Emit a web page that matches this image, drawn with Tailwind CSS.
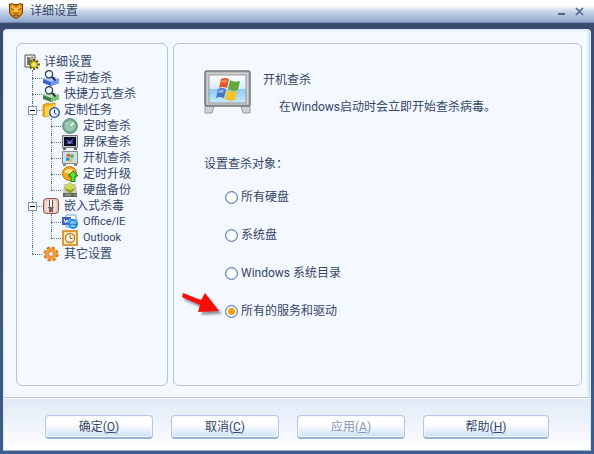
<!DOCTYPE html>
<html lang="zh-CN">
<head>
  <meta charset="UTF-8">
  <meta name="viewport" content="width=device-width, initial-scale=1">
  <title>详细设置</title>
  <script src="https://cdn.jsdelivr.net/npm/@tailwindcss/browser@4"></script>
</head>

<body class="h-screen flex flex-col bg-linear-to-b from-[#3b4b6c] to-[#3f5c8c] text-[#354668] text-xs font-['Roboto','Noto_Sans_CJK_SC',sans-serif]">

  <!-- Title bar -->
  <header class="h-[23px] shrink-0 flex items-center pl-2 pr-[6px] bg-linear-to-b from-white from-25% via-[#ccd7e9] via-50% to-[#92a8cf] border-b border-[#758bb5]">
    <svg class="w-4 h-4" viewBox="0 0 16 16">
      <path d="M1 1 4 0l2 1h4l2-1 3 1v7c0 4-3 6-7 8-4-2-7-4-7-8z" fill="#70410f"/>
      <path d="M2 2l2-1 2 1h4l2-1 2 1v6c0 3-2 5-6 7-4-2-6-4-6-7z" fill="#e79719"/>
      <path d="M4 3l2 2h4l2-2v4l-2 2H6L4 7z" fill="#ffc543"/>
      <path d="M3 5.500l3 1.500M13 5.500l-3 1.500M6 10l2 1 2-1M5 12l3 1 3-1M8 2v2" stroke="#6c3b08" fill="none" stroke-width=".9"/>
    </svg>
    <h1 class="flex-1 pl-[6px]">详细设置</h1>
    <button type="button" aria-label="最小化" class="w-[18px] h-4 flex items-center justify-center">
      <svg class="w-[9px] h-[9px]" viewBox="0 0 9 9"><path d="M1 7h7" stroke="#52658f" stroke-width="2"/></svg>
    </button>
    <button type="button" aria-label="关闭" class="w-[18px] h-4 flex items-center justify-center">
      <svg class="w-[9px] h-[9px]" viewBox="0 0 9 9"><path d="M1 1l7 7M8 1 1 8" stroke="#52658f" stroke-width="1.7"/></svg>
    </button>
  </header>

  <div class="flex-1 min-h-0 flex flex-col mx-[3px] mt-[6px] mb-[3px] rounded-t border border-[#dbe8f8] border-b-[#9eb4d6] bg-[#f4f8ff] shadow-[inset_-2px_0_2px_#cfe0f5]">

    <main class="flex-1 min-h-0 flex gap-[5px] pt-[13px] pb-[11px] pl-3 pr-2">

      <!-- Settings tree -->
      <nav class="w-[152px] shrink-0 rounded-md border border-[#b4c5dc] pt-[10px] pl-[7px] leading-4 whitespace-nowrap">
        <div class="flex items-center gap-1 h-4">
          <svg class="w-4 h-4 shrink-0" viewBox="0 0 16 16">
            <path d="M1 1h10v12H1z" fill="#f6f6f0" stroke="#555"/>
            <path d="M3 3h3v8H3z" fill="#777"/><path d="M7 3h2v3H7z" fill="#fff" stroke="#444" stroke-width=".7"/>
            <path d="M10 5v11M5 10.500h11M6 6.500l8 8M14 6.500l-8 8" stroke="#665900" stroke-width="2"/>
            <circle cx="10" cy="10.500" r="3.500" fill="#e2d21b" stroke="#7b6b00" stroke-width=".7"/>
            <circle cx="10" cy="10.500" r="1.300" fill="#fff"/>
          </svg>
          <span>详细设置</span>
        </div>

        <ul class="ml-2">
          <li class="relative">
            <span class="absolute left-0 top-0 bottom-0 border-l border-dotted border-[#66758f]"></span>
            <a href="#" class="flex items-center h-4">
              <span class="w-[10px] border-t border-dotted border-[#66758f]"></span>
              <svg class="w-[18px] h-4 shrink-0" viewBox="0 0 18 16">
                <path d="M1 9l8-3 8 3v4l-8 3-8-3z" fill="#3564c4"/>
                <path d="M1 9l8-3 8 3-8 3z" fill="#a9c9fa"/><path d="M9 12l8-3v4l-8 3z" fill="#6f9cf0"/>
                <path d="M9.500 6.500l4 4" stroke="#332c55" stroke-width="2"/>
                <circle cx="7" cy="4.300" r="3.600" fill="#effaff" stroke="#29334a" stroke-width="1.200"/>
              </svg>
              <span class="pl-1">手动查杀</span>
            </a>
          </li>
          <li class="relative">
            <span class="absolute left-0 top-0 bottom-0 border-l border-dotted border-[#66758f]"></span>
            <a href="#" class="flex items-center h-4">
              <span class="w-[10px] border-t border-dotted border-[#66758f]"></span>
              <svg class="w-[18px] h-4 shrink-0" viewBox="0 0 18 16">
                <path d="M1 9l8-3 8 3v4l-8 3-8-3z" fill="#427d45"/>
                <path d="M1 9l8-3 8 3-8 3z" fill="#b4dfae"/><path d="M9 12l8-3v4l-8 3z" fill="#7cc072"/>
                <path d="M9.500 6.500l4 4" stroke="#332c35" stroke-width="2"/>
                <circle cx="7" cy="4.300" r="3.600" fill="#effaff" stroke="#29334a" stroke-width="1.200"/>
              </svg>
              <span class="pl-1">快捷方式查杀</span>
            </a>
          </li>

          <li class="relative">
            <span class="absolute left-0 top-0 bottom-0 border-l border-dotted border-[#66758f]"></span>
            <button type="button" aria-label="折叠定制任务" class="absolute -left-1 top-1 w-[9px] h-[9px] flex items-center justify-center bg-white border border-[#8592a7]">
              <span class="w-[5px] h-px bg-black"></span>
            </button>
            <a href="#" class="flex items-center h-4">
              <span class="w-[10px] border-t border-dotted border-[#66758f]"></span>
              <svg class="w-[18px] h-4 shrink-0" viewBox="0 0 18 16">
                <path d="M1 3l5-2 2 1 5-1v11L3 15l-2-1z" fill="#f3ae13" stroke="#b97907" stroke-width=".7"/>
                <path d="M3 5l10-3v10L3 15z" fill="#ffd453"/>
                <circle cx="12.500" cy="10.500" r="4.800" fill="#e5f2ff" stroke="#254b86" stroke-width="1.300"/>
                <path d="M12.500 7.500v3.500l2 1.500" stroke="#223b66" fill="none"/>
              </svg>
              <span class="pl-1">定制任务</span>
            </a>
            <ul class="ml-[19px]">
              <li class="relative">
                <span class="absolute left-0 top-0 bottom-0 border-l border-dotted border-[#66758f]"></span>
                <a href="#" class="flex items-center h-4">
                  <span class="w-[10px] border-t border-dotted border-[#66758f]"></span>
                  <svg class="w-[18px] h-4 shrink-0" viewBox="0 0 18 16">
                    <circle cx="9" cy="8" r="7.500" fill="#669b88" stroke="#7f9d98"/>
                    <circle cx="9" cy="8" r="5.700" fill="#96c8ae"/>
                    <path d="M9 12V8L4.500 5.500M9 8l4-3" stroke="#f2fff7" fill="none" stroke-width="1.500"/>
                    <path d="M9 12V8L5 6" stroke="#316356" fill="none" stroke-width=".7"/>
                  </svg>
                  <span class="pl-1">定时查杀</span>
                </a>
              </li>
              <li class="relative">
                <span class="absolute left-0 top-0 bottom-0 border-l border-dotted border-[#66758f]"></span>
                <a href="#" class="flex items-center h-4">
                  <span class="w-[10px] border-t border-dotted border-[#66758f]"></span>
                  <svg class="w-[18px] h-4 shrink-0" viewBox="0 0 18 16">
                    <path d="M1.500 1.500h15v12h-15z" fill="#cbcbc8" stroke="#777"/>
                    <path d="M3 3h12v9H3z" fill="#070b29"/><path d="M2 14h3v2H2zM13 14h3v2h-3z" fill="#666"/>
                    <path d="M5 5l4 2 4-3-2 4 2 2-4-1-4 1 2-2z" fill="#4c5bbd"/><path d="M6 9l3-1 1 2z" fill="#b9a3e9"/>
                  </svg>
                  <span class="pl-1">屏保查杀</span>
                </a>
              </li>
              <li class="relative">
                <span class="absolute left-0 top-0 bottom-0 border-l border-dotted border-[#66758f]"></span>
                <a href="#" aria-current="page" class="flex items-center h-4">
                  <span class="w-[10px] border-t border-dotted border-[#66758f]"></span>
                  <svg class="w-[18px] h-4 shrink-0" viewBox="0 0 18 16">
                    <path d="M1.500 1.500h15v12h-15z" fill="#ddd" stroke="#888"/>
                    <path d="M3 3h12v9H3z" fill="#b9e1fa"/><path d="M2 14h3v2H2zM13 14h3v2h-3z" fill="#888"/>
                    <path d="M6 4q2-1 3 0v3q-2-1-4 0z" fill="#ed592b"/><path d="M10 4q2 1 3 0l-1 4q-2 0-3-1z" fill="#5fac36"/>
                    <path d="M5 8q2-1 4 0l-1 3q-2-1-3 0z" fill="#3c83db"/><path d="M9 8q2 1 3 1l-1 3q-2 0-3-1z" fill="#f5bd25"/>
                  </svg>
                  <span class="pl-1">开机查杀</span>
                </a>
              </li>
              <li class="relative">
                <span class="absolute left-0 top-0 bottom-0 border-l border-dotted border-[#66758f]"></span>
                <a href="#" class="flex items-center h-4">
                  <span class="w-[10px] border-t border-dotted border-[#66758f]"></span>
                  <svg class="w-[18px] h-4 shrink-0" viewBox="0 0 18 16">
                    <circle cx="8.500" cy="7.500" r="7" fill="#f3a91b" stroke="#b87409"/>
                    <path d="M3 6q3-5 9-2-1 4-6 3z" fill="#ffe884"/>
                    <path d="M12 5l5 5h-3v5.500h-4V10H7z" fill="#65df37" stroke="#177b12"/>
                  </svg>
                  <span class="pl-1">定时升级</span>
                </a>
              </li>
              <li class="relative">
                <span class="absolute left-0 top-0 h-2 border-l border-dotted border-[#66758f]"></span>
                <a href="#" class="flex items-center h-4">
                  <span class="w-[10px] border-t border-dotted border-[#66758f]"></span>
                  <svg class="w-[18px] h-4 shrink-0" viewBox="0 0 18 16">
                    <path d="M3 2h12l1 9H2z" fill="#c9c9bd"/><path d="M2 11h14v4H2z" fill="#62665b"/>
                    <path d="M9 0l6 6-6 6-6-6z" fill="#8fa31c"/><path d="M9 0l6 6-6 2-6-2z" fill="#cdd954"/>
                    <path d="M4 13h6" stroke="#bbb"/><path d="M13 13h2" stroke="#9ddd65"/>
                  </svg>
                  <span class="pl-1">硬盘备份</span>
                </a>
              </li>
            </ul>
          </li>

          <li class="relative">
            <span class="absolute left-0 top-0 bottom-0 border-l border-dotted border-[#66758f]"></span>
            <button type="button" aria-label="折叠嵌入式杀毒" class="absolute -left-1 top-1 w-[9px] h-[9px] flex items-center justify-center bg-white border border-[#8592a7]">
              <span class="w-[5px] h-px bg-black"></span>
            </button>
            <a href="#" class="flex items-center h-4">
              <span class="w-[10px] border-t border-dotted border-[#66758f]"></span>
              <svg class="w-[18px] h-4 shrink-0" viewBox="0 0 18 16">
                <rect x="1.500" y=".5" width="15" height="15" rx="3" fill="#e9c2b4" stroke="#8e5147"/>
                <rect x="3.500" y="2.500" width="11" height="11" rx="2" fill="#f5ded5"/>
                <path d="M7 2v7h1V2zM10 2v7h1V2z" fill="#555"/><path d="M8 2h2v7H8z" fill="#fff"/>
                <path d="M6 9h6l-1 2v3H7v-3z" fill="#6d6664"/>
              </svg>
              <span class="pl-1">嵌入式杀毒</span>
            </a>
            <ul class="ml-[19px] text-[11px] leading-4">
              <li class="relative">
                <span class="absolute left-0 top-0 bottom-0 border-l border-dotted border-[#66758f]"></span>
                <a href="#" class="flex items-center h-4">
                  <span class="w-[10px] border-t border-dotted border-[#66758f]"></span>
                  <svg class="w-[18px] h-4 shrink-0" viewBox="0 0 18 16">
                    <path d="M5 1h10v12H5z" fill="#f4faff" stroke="#79a3d6"/>
                    <path d="M1 3h9v8H1z" fill="#3566ba"/><path d="M3 5l1.500 4L6 6l1.500 3L9 5" stroke="#fff" fill="none"/>
                    <circle cx="12" cy="10" r="4" fill="#8fd0fa" stroke="#2089e4" stroke-width="2"/>
                    <path d="M9 10.500h7" stroke="#197bd6" stroke-width="1.500"/><path d="M7 14Q12 10 17 5" stroke="#55b3f3" fill="none"/>
                  </svg>
                  <span class="pl-1">Office/IE</span>
                </a>
              </li>
              <li class="relative">
                <span class="absolute left-0 top-0 h-2 border-l border-dotted border-[#66758f]"></span>
                <a href="#" class="flex items-center h-4">
                  <span class="w-[10px] border-t border-dotted border-[#66758f]"></span>
                  <svg class="w-[18px] h-4 shrink-0" viewBox="0 0 18 16">
                    <path d="M2 1h14v14H2z" fill="#ffe7b3" stroke="#d99a3c" stroke-width="2"/>
                    <circle cx="9" cy="8" r="4.500" fill="#fffaf0" stroke="#c07922" stroke-width="1.300"/>
                    <path d="M9 5v3.500h2.500" stroke="#986020" fill="none"/>
                  </svg>
                  <span class="pl-1">Outlook</span>
                </a>
              </li>
            </ul>
          </li>

          <li class="relative">
            <span class="absolute left-0 top-0 h-2 border-l border-dotted border-[#66758f]"></span>
            <a href="#" class="flex items-center h-4">
              <span class="w-[10px] border-t border-dotted border-[#66758f]"></span>
              <svg class="w-[18px] h-4 shrink-0" viewBox="0 0 18 16">
                <circle cx="9" cy="8" r="6" fill="none" stroke="#cf741b" stroke-width="3" stroke-dasharray="3 1.700"/>
                <circle cx="9" cy="8" r="4.200" fill="none" stroke="#f09a38" stroke-width="3.500"/>
                <circle cx="9" cy="8" r="2.300" fill="#fff" stroke="#b9661a" stroke-width=".7"/>
              </svg>
              <span class="pl-1">其它设置</span>
            </a>
          </li>
        </ul>
      </nav>

      <!-- Detail panel -->
      <section class="flex-1 min-w-0 rounded-md border border-[#b4c5dc] pl-[30px] pt-[26px] whitespace-nowrap">
        <div class="flex gap-3">
          <svg class="w-[47px] h-11 shrink-0" viewBox="0 0 47 44">
            <defs>
              <linearGradient id="screen" x2="0" y2="1">
                <stop stop-color="#fff"/><stop offset=".5" stop-color="#d3ebfe"/>
                <stop offset=".51" stop-color="#8bc9f7"/><stop offset="1" stop-color="#c7eaff"/>
              </linearGradient>
            </defs>
            <path d="M1 36h9l-2 7H1zM37 36h9v7h-7z" fill="#d2d2d2" stroke="#9b9b9b"/>
            <rect x="1" y="1" width="45" height="35" rx="2" fill="#b9babb" stroke="#777" stroke-width="1.500"/>
            <rect x="3" y="3" width="41" height="31" fill="#d0d0d0"/>
            <rect x="5" y="5" width="37" height="28" fill="url(#screen)" stroke="#969696"/>
            <path d="M17 9q4-2 8 0l-2 9q-4-2-8 0z" fill="#e45427"/>
            <path d="M26 10q4 3 10 1l-2 9q-5 2-10-1z" fill="#64a83b"/>
            <path d="M14 19q4-2 8 0l-2 9q-4-2-8 0z" fill="#4775c8"/>
            <path d="M23 20q5 3 10 1l-2 9q-5 2-10-1z" fill="#f4c522"/>
            <path d="M18 10q3-1 5 0l-1 3q-3-1-5 0z" fill="#f58b64"/><path d="M15 20q3-1 5 0l-1 3q-3-1-5 0z" fill="#91b5ed"/>
          </svg>
          <div class="leading-5">
            <h2>开机查杀</h2>
            <p class="pt-[7px] pl-4">在Windows启动时会立即开始查杀病毒。</p>
          </div>
        </div>

        <fieldset class="pt-[39px]">
          <legend class="contents">设置查杀对象：</legend>
          <div class="pl-[21px] pt-[6px]">
            <div class="flex items-center h-[38px]">
              <input type="radio" name="target" id="all-disks" class="appearance-none w-[13px] h-[13px] rounded-full border border-[#5878a8] bg-white p-[2px] bg-clip-content shadow-[inset_0_0_1px_#5878a8]">
              <label for="all-disks" class="pl-[3px]">所有硬盘</label>
            </div>
            <div class="flex items-center h-[38px]">
              <input type="radio" name="target" id="system-disk" class="appearance-none w-[13px] h-[13px] rounded-full border border-[#5878a8] bg-white p-[2px] bg-clip-content shadow-[inset_0_0_1px_#5878a8]">
              <label for="system-disk" class="pl-[3px]">系统盘</label>
            </div>
            <div class="flex items-center h-[38px]">
              <input type="radio" name="target" id="windows-dir" class="appearance-none w-[13px] h-[13px] rounded-full border border-[#5878a8] bg-white p-[2px] bg-clip-content shadow-[inset_0_0_1px_#5878a8]">
              <label for="windows-dir" class="pl-[3px]">Windows 系统目录</label>
            </div>
            <div class="relative flex items-center h-[38px]">
              <!-- Red pointer -->
              <svg class="absolute -left-11 -top-1 w-11 h-8" viewBox="0 0 44 32">
                <defs>
                  <filter id="soft" x="-20%" y="-20%" width="140%" height="140%"><feGaussianBlur stdDeviation="1"/></filter>
                </defs>
                <path d="M3 12 4 8l20 7 3-6 14 17-21 1 3-6z" fill="#3f485c" opacity=".55" filter="url(#soft)"/>
                <path d="M1 9 2 5l18 7 4-7 14 18-21 1 2-7z" fill="#f90d09"/>
              </svg>
              <input type="radio" name="target" id="services" checked class="appearance-none w-[13px] h-[13px] rounded-full border border-[#5878a8] bg-white p-[2px] bg-clip-content shadow-[inset_0_0_1px_#5878a8] checked:bg-[#ff9d0a]">
              <label for="services" class="pl-[3px]">所有的服务和驱动</label>
            </div>
          </div>
        </fieldset>
      </section>
    </main>

    <!-- Buttons -->
    <footer class="h-[53px] shrink-0 flex gap-[18px] pt-[17px] pl-[41px] border-t border-[#b5c6de] shadow-[inset_0_1px_0_#fff] bg-linear-to-b from-[#dfe9f6] to-white">
      <button type="button" class="w-[108px] h-6 rounded border border-[#b4c8e4] border-b-2 border-b-[#98b2d9] bg-linear-to-b from-white from-40% to-[#cddff5] shadow-[inset_0_0_0_1px_#f4f9ff]">确定(<u>O</u>)</button>
      <button type="button" class="w-[108px] h-6 rounded border border-[#b4c8e4] border-b-2 border-b-[#98b2d9] bg-linear-to-b from-white from-40% to-[#cddff5] shadow-[inset_0_0_0_1px_#f4f9ff]">取消(<u>C</u>)</button>
      <button type="button" disabled class="w-[108px] h-6 rounded border border-[#b4c8e4] border-b-2 border-b-[#98b2d9] bg-linear-to-b from-white from-40% to-[#cddff5] shadow-[inset_0_0_0_1px_#f4f9ff] text-[#8698b4]">应用(<u>A</u>)</button>
      <button type="button" class="w-[126px] h-6 rounded border border-[#b4c8e4] border-b-2 border-b-[#98b2d9] bg-linear-to-b from-white from-40% to-[#cddff5] shadow-[inset_0_0_0_1px_#f4f9ff]">帮助(<u>H</u>)</button>
    </footer>
  </div>

</body>
</html>
